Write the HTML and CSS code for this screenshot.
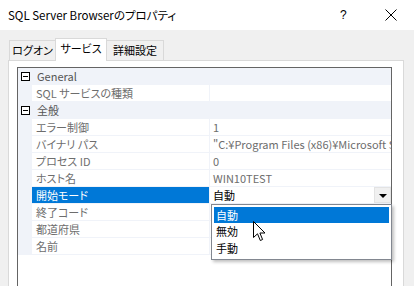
FILE: index.html
```html
<!DOCTYPE html>
<html lang="ja">

<head>
    <meta charset="UTF-8">
    <title>SQL Server Browserのプロパティ</title>
    <link rel="stylesheet" href="styles.css">
</head>

<body>
    <div class="window">
        <header class="titlebar">
            <span class="title">SQL Server Browserのプロパティ</span>
            <span class="help">?</span>
            <span class="close">
                <svg width="12" height="12" viewBox="0 0 12 12"><path d="M0.5 0.5 L11.5 11.5 M11.5 0.5 L0.5 11.5" stroke="#000" stroke-width="1" fill="none"/></svg>
            </span>
        </header>

        <div class="tabs">
            <div class="tab tab-logon">ログオン</div>
            <div class="tab active">サービス</div>
            <div class="tab tab-adv">詳細設定</div>
        </div>

        <div class="panel">
            <div class="grid">
                <div class="row category"><span class="toggle"></span><span class="cat-name">General</span></div>
                <div class="row"><span class="gutter"></span><span class="label">SQL サービスの種類</span><span class="value"></span></div>
                <div class="row category"><span class="toggle"></span><span class="cat-name">全般</span></div>
                <div class="row"><span class="gutter"></span><span class="label">エラー制御</span><span class="value">1</span></div>
                <div class="row"><span class="gutter"></span><span class="label">バイナリ パス</span><span class="value">"C:¥Program Files (x86)¥Microsoft SQL</span></div>
                <div class="row"><span class="gutter"></span><span class="label">プロセス ID</span><span class="value">0</span></div>
                <div class="row"><span class="gutter"></span><span class="label">ホスト名</span><span class="value">WIN10TEST</span></div>
                <div class="row"><span class="gutter"></span><span class="label selected">開始モード</span><span class="value editable">自動<span class="drop-btn"></span></span></div>
                <div class="row"><span class="gutter"></span><span class="label">終了コード</span><span class="value"></span></div>
                <div class="row"><span class="gutter"></span><span class="label">都道府県</span><span class="value"></span></div>
                <div class="row"><span class="gutter"></span><span class="label">名前</span><span class="value"></span></div>

                <ul class="dropdown">
                    <li class="hover">自動</li>
                    <li>無効</li>
                    <li>手動</li>
                </ul>

                <svg class="cursor" width="13" height="21" viewBox="0 0 13 21">
                    <path d="M0.5 0.5 L0.5 16.5 L4.5 12.8 L7.3 19.5 L9.6 18.5 L6.9 12 L12 12 Z" fill="#fff" stroke="#000" stroke-width="1" stroke-linejoin="miter"/>
                </svg>
            </div>
        </div>
    </div>
</body>

</html>
```

FILE: styles.css
```css
html, body {
    margin: 0;
    padding: 0;
}

body {
    font-family: "Noto Sans CJK JP", "Noto Sans", sans-serif;
    font-size: 11px;
    font-feature-settings: "palt" 1;
    color: #000;
    background-color: #f0f0f0;
}

.window {
    width: 414px;
    height: 286px;
    overflow: hidden;
    display: flex;
    flex-direction: column;
    background-color: #f0f0f0;
}

.titlebar {
    height: 30px;
    flex: none;
    background-color: #fff;
    display: flex;
    align-items: center;
    box-sizing: border-box;
    padding: 0 0 0 8px;
}

.title {
    flex: 1;
    font-size: 11.5px;
    line-height: 16px;
    margin-top: -1px;
}

.help {
    width: 8px;
    margin-right: 37px;
    font-size: 12px;
    font-family: "Liberation Sans", sans-serif;
    line-height: 14px;
}

.close {
    width: 12px;
    height: 12px;
    margin-right: 17px;
    display: flex;
}

.tabs {
    display: flex;
    align-items: flex-end;
    padding-left: 9px;
    margin-top: 8px;
    height: 22px;
    position: relative;
    z-index: 2;
}

.tab {
    height: 20px;
    box-sizing: border-box;
    border: 1px solid #d9d9d9;
    border-bottom: none;
    background-color: #f0f0f0;
    line-height: 19px;
    padding: 0;
    text-align: center;
    white-space: nowrap;
}

.tab-logon {
    width: 46px;
    border-right: none;
}

.tab.active {
    height: 23px;
    width: 52px;
    background-color: #fff;
    margin-bottom: -1px;
    line-height: 19px;
}

.tab-adv {
    width: 57px;
    border-left: none;
}

.panel {
    flex: 1;
    margin: 0 10px 0 8px;
    background-color: #fff;
    border: 1px solid #d9d9d9;
    border-bottom: none;
    padding: 6px 11px 0 8px;
    display: flex;
    flex-direction: column;
}

.grid {
    flex: 1;
    position: relative;
    border: 1px solid #646464;
    border-bottom: none;
    background-color: #fff;
}

.row {
    display: flex;
    height: 17px;
    box-sizing: border-box;
    border-bottom: 1px solid #f0f3f9;
    line-height: 16px;
    color: #6d6d6d;
}

.category {
    background-color: #f0f3f9;
    color: #555;
    align-items: center;
}

.toggle {
    width: 9px;
    height: 9px;
    box-sizing: border-box;
    border: 1px solid #000;
    margin: 0 7px 0 3px;
    position: relative;
    background-color: #fff;
}

.toggle::after {
    content: "";
    position: absolute;
    left: 1px;
    right: 1px;
    top: 3px;
    height: 1px;
    background-color: #000;
}

.cat-name {
    line-height: 16px;
}

.gutter {
    width: 14px;
    flex: none;
    background-color: #f0f3f9;
}

.label {
    width: 178px;
    flex: none;
    padding-left: 4px;
    box-sizing: border-box;
    border-right: 1px solid #f0f3f9;
    white-space: nowrap;
    overflow: hidden;
}

.label.selected {
    background-color: #0078d7;
    color: #fff;
}

.value {
    flex: 1;
    padding-left: 3px;
    white-space: nowrap;
    overflow: hidden;
    position: relative;
}

.value.editable {
    color: #000;
}

.drop-btn {
    position: absolute;
    right: 0;
    top: 0;
    width: 17px;
    height: 16px;
    box-sizing: border-box;
    background-color: #f0f0f0;
    border: 1px solid #e3e3e3;
}

.drop-btn::after {
    content: "";
    position: absolute;
    left: 4px;
    top: 6px;
    border-left: 4px solid transparent;
    border-right: 4px solid transparent;
    border-top: 4px solid #000;
}

.dropdown {
    position: absolute;
    left: 193px;
    top: 136px;
    width: 181px;
    height: 56px;
    box-sizing: border-box;
    margin: 0;
    padding: 2px 2px;
    list-style: none;
    background-color: #fff;
    border: 1px solid #828790;
    box-shadow: 2px 2px 3px rgba(0, 0, 0, 0.25);
    z-index: 5;
}

.dropdown li {
    height: 17px;
    line-height: 16px;
    padding-left: 2px;
    color: #000;
}

.dropdown li.hover {
    background-color: #0078d7;
    color: #fff;
    height: 16px;
}

.cursor {
    position: absolute;
    left: 235px;
    top: 153px;
    z-index: 6;
}
```
